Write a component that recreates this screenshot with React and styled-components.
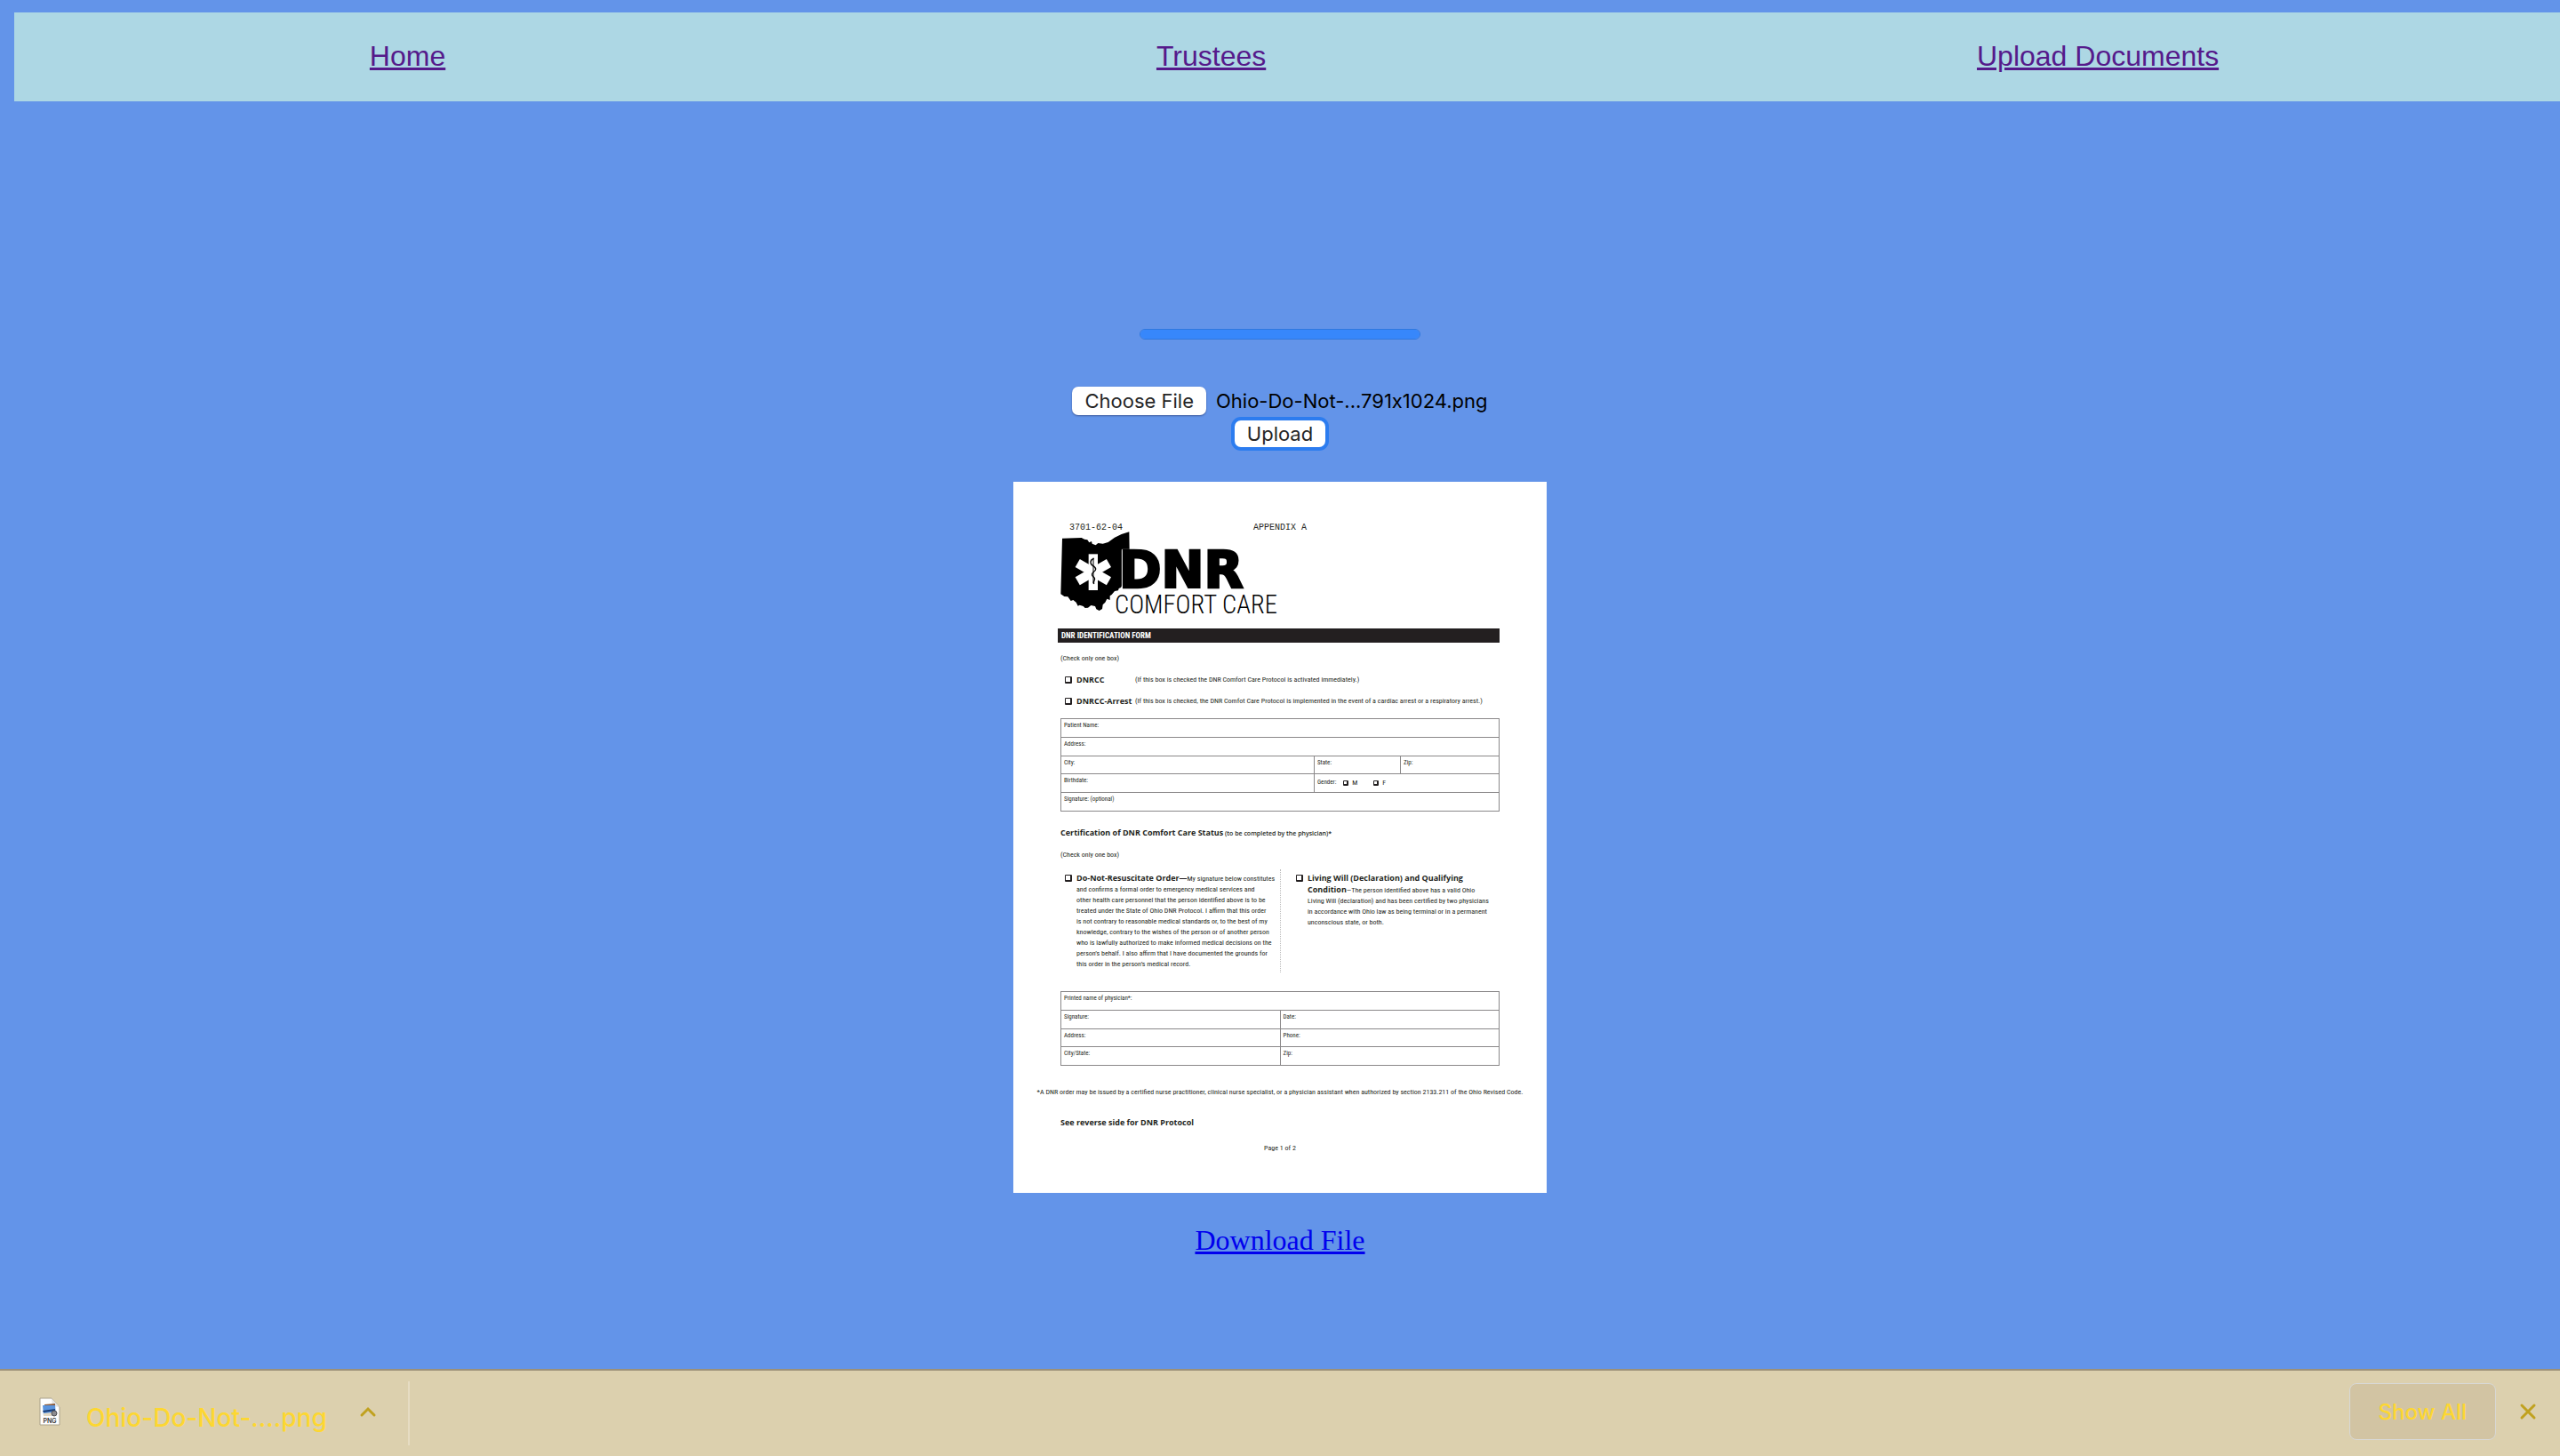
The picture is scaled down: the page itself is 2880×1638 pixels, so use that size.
import React from "react";
import styled, { createGlobalStyle, css } from "styled-components";

const GlobalStyle = createGlobalStyle`
  *, *::before, *::after { box-sizing: border-box; }
  body { margin: 0; background: #6394e9; }
`;

const ui = css`
  font-family: Inter, Roboto, "Liberation Sans", sans-serif;
  font-variant-ligatures: no-contextual;
`;

const Page = styled.div`
  display: flex;
  flex-direction: column;
  min-height: 100vh;
  padding-top: 14px;
  overflow: hidden;
`;

const Nav = styled.nav`
  display: flex;
  flex: none;
  justify-content: space-around;
  width: 100vw;
  margin-left: 16px;
  padding: 31px 0 33px;
  background: #add7e4;
`;

const NavLink = styled.a`
  color: #551a8b;
  font: 32px/36px "Liberation Sans", Arial, sans-serif;
`;

const Main = styled.main`
  display: flex;
  flex: 1;
  flex-direction: column;
  align-items: center;
  padding: 256px 0 120px;
`;

const Progress = styled.progress`
  appearance: none;
  display: block;
  width: 316px;
  height: 12px;
  border: 1px solid #2f78df;
  border-radius: 6px;
  overflow: hidden;
  background: #3787fb;
  &::-webkit-progress-bar { background: #3787fb; }
  &::-webkit-progress-value { background: #3787fb; }
`;

const UploadForm = styled.form`
  display: flex;
  flex-direction: column;
  align-items: center;
  gap: 6px;
  margin: 53px 0 39px;
`;

const FileField = styled.label`
  ${ui}
  position: relative;
  display: flex;
  align-items: center;
  gap: 11px;
  font-size: 22px;
  line-height: 32px;
  color: #000;
`;

const HiddenFile = styled.input`
  position: absolute;
  inset: 0;
  width: 100%;
  opacity: 0;
`;

const pushButton = css`
  ${ui}
  border: 0;
  border-radius: 7px;
  background: #fff;
  color: #262626;
  font-size: 22px;
  box-shadow: 0 1px 2px rgba(0, 0, 40, 0.4);
`;

const ChooseButton = styled.span`
  ${pushButton}
  padding: 0 14px;
`;

const UploadButton = styled.button`
  ${pushButton}
  height: 30px;
  padding: 0 14px;
  line-height: 30px;
  box-shadow: 0 0 0 4px #2c7cef;
`;

const Download = styled.a`
  margin-top: 35px;
  color: #0000ee;
  font: 32px/36px "Liberation Serif", "Times New Roman", serif;
`;

const Sheet = styled.article`
  display: flex;
  flex-direction: column;
  width: 600px;
  padding: 48px 53px 44px;
  background: #fff;
  color: #231f20;
  font: 8px/12px "Roboto Condensed", Lato, sans-serif;
  white-space: nowrap;
`;

const CodeLine = styled.div`
  display: grid;
  grid-template-columns: 207px auto;
  padding-left: 10px;
  font: 10px/8px "Liberation Mono", monospace;
`;

const Logo = styled.svg`
  display: block;
  width: 247px;
  height: 103px;
`;

const Banner = styled.h1`
  margin: 6px 0 0 -3px;
  padding-left: 4px;
  background: #231f20;
  color: #fff;
  font-size: 9px;
  line-height: 16px;
`;

const Line = styled.p`
  margin: ${(p) => p.$top}px 0 0;
  text-align: ${(p) => (p.$center ? "center" : "left")};
`;

const Wide = styled(Line)`
  display: flex;
  justify-content: center;
`;

const Strong = styled.strong`
  color: #231f20;
  font: bold 9px/12px "Open Sans", sans-serif;
`;

const Note = styled.span`
  font: 600 7px/12px "Open Sans", sans-serif;
`;

const Option = styled.label`
  display: grid;
  grid-template-columns: 13px 66px auto;
  align-items: center;
  margin-top: 12px;
  padding-left: 5px;
`;

const Box = styled.input.attrs({ type: "checkbox" })`
  appearance: none;
  width: ${(p) => (p.$small ? 6 : 8)}px;
  height: ${(p) => (p.$small ? 6 : 8)}px;
  margin: 0;
  border: solid #231f20;
  border-width: 1px 2px 2px 1px;
  border-radius: 1px;
`;

const Table = styled.table`
  width: 100%;
  margin-top: ${(p) => p.$top}px;
  border-collapse: collapse;
  table-layout: fixed;
  font-size: 7px;
  line-height: 10px;
`;

const Cell = styled.td`
  height: ${(p) => (p.$short ? 20 : 21)}px;
  padding: 2px 3px;
  border: 1px solid #8a8889;
  vertical-align: top;
`;

const Genders = styled.div`
  display: flex;
  align-items: center;
  gap: 18px;
`;

const GenderName = styled.span`
  margin-right: -10px;
`;

const Gender = styled.label`
  display: flex;
  align-items: center;
  gap: 4px;
  padding-top: 3px;
  font-size: 8px;
`;

const Columns = styled.div`
  display: grid;
  grid-template-columns: repeat(2, minmax(0, 1fr));
  height: 116px;
  margin-top: 10px;
`;

const Statement = styled.label`
  display: grid;
  grid-template-columns: 13px auto;
  justify-content: start;
  align-items: start;
  padding: 4px 0 0 5px;
  & + & {
    padding-left: 17px;
    border-left: 1px dotted #bbb;
  }
  ${Box} { margin-top: 2px; }
`;

const Shelf = styled.footer`
  ${ui}
  display: flex;
  flex: none;
  align-items: center;
  height: 98px;
  padding: 0 26px 4px 44px;
  border-top: 2px solid #9c9078;
  background: #dcd0ae;
  color: #fdd731;
`;

const Divider = styled.div`
  width: 2px;
  height: 72px;
  margin: 4px auto 0 35px;
  background: #e6dcc3;
`;

const Name = styled.span`
  margin: 14px 36px 0 29px;
  font-size: 28px;
  font-weight: 500;
  line-height: 36px;
`;

const IconButton = styled.button`
  display: flex;
  padding: 0;
  border: 0;
  background: none;
  color: #c0a11f;
`;

const ShowAll = styled.button`
  ${ui}
  height: 64px;
  margin-right: 26px;
  padding: 0 32px;
  border: 1px solid #d8d8d6;
  border-radius: 8px;
  background: #d2c4a3;
  color: #fdd731;
  font-size: 24px;
  font-weight: 500;
`;

function DnrLogo() {
  return (
    <Logo viewBox="39 51 741 309" role="img" aria-label="DNR Comfort Care">
      <path
        fill="#000"
        d="M45 74 L110 72 L120 77 L130 79 L136 88 L144 84 L146 92 L158 97 L166 90 L182 92 L200 87 L222 71 L245 60 L271 52 L272 118 L248 118 L248 232 L243 240 L236 243 L234 250 L222 252 L212 264 L206 268 L206 282 L196 278 L190 290 L182 298 L180 312 L170 318 L160 313 L156 303 L142 300 L132 308 L122 309 L116 303 L104 299 L98 302 L92 290 L82 282 L74 285 L64 271 L52 270 L40 262 Z"
      />
      <g fill="#fff">
        <rect x="134" y="127" width="31" height="122" />
        <rect x="134" y="127" width="31" height="122" transform="rotate(60 149.500 188)" />
        <rect x="134" y="127" width="31" height="122" transform="rotate(-60 149.500 188)" />
      </g>
      <path d="M150 140 V226" stroke="#000" strokeWidth="3" />
      <path
        d="M152 142 C138 146 138 160 148 166 C162 174 160 182 150 188 C140 196 148 202 154 208 C158 214 148 216 152 228"
        fill="none"
        stroke="#000"
        strokeWidth="4"
      />
      <path d="M275 112 H247 V240" fill="none" stroke="#fff" strokeWidth="3" />
      <text
        x="237"
        y="239"
        fontFamily="DejaVu Sans, sans-serif"
        fontWeight="bold"
        fontSize="172"
        stroke="#000"
        strokeWidth="8"
      >
        DNR
      </text>
      <text x="222" y="328" fontFamily="Roboto Condensed, Lato, sans-serif" fontWeight="300" fontSize="86">
        COMFORT CARE
      </text>
    </Logo>
  );
}

function FileIcon() {
  return (
    <svg width="24" height="32" viewBox="0 0 24 32" aria-hidden="true">
      <path d="M1 1 H14 L23 11 V31 H1 Z" fill="#fff" stroke="#a9a08a" />
      <path d="M14 1 L15 10 L23 11 Z" fill="#e4e4e4" />
      <path d="M6 8 L18 7 V10 H6 Z" fill="#8a5a3a" />
      <path d="M4 9 L18 9 L19 20 L5 21 Z" fill="#5b94dd" />
      <path d="M4 15 L18 13 V15 L5 17 Z" fill="#1c3f78" />
      <path d="M5 18 L15 17 L14 21 L5 21 Z" fill="#e3d9c4" />
      <circle cx="17" cy="18" r="3" fill="#8b8b90" stroke="#4d4d52" />
      <text x="12" y="29" textAnchor="middle" fontFamily="Inter, sans-serif" fontSize="7" fontWeight="600" fill="#333">
        PNG
      </text>
    </svg>
  );
}

const orderLines = [
  "and confirms a formal order to emergency medical services and",
  "other health care personnel that the person identified above is to be",
  "treated under the State of Ohio DNR Protocol. I affirm that this order",
  "is not contrary to reasonable medical standards or, to the best of my",
  "knowledge, contrary to the wishes of the person or of another person",
  "who is lawfully authorized to make informed medical decisions on the",
  "person’s behalf. I also affirm that I have documented the grounds for",
  "this order in the person’s medical record.",
];

const willLines = [
  "Living Will (declaration) and has been certified by two physicians",
  "in accordance with Ohio law as being terminal or in a permanent",
  "unconscious state, or both.",
];

const Lines = ({ items }) =>
  items.map((t) => (
    <React.Fragment key={t}>
      <br />
      {t}
    </React.Fragment>
  ));

function DnrForm() {
  return (
    <Sheet>
      <CodeLine>
        <span>3701-62-04</span>
        <span>APPENDIX A</span>
      </CodeLine>
      <DnrLogo />
      <Banner>DNR IDENTIFICATION FORM</Banner>
      <Line $top={12}>(Check only one box)</Line>
      <Option>
        <Box />
        <Strong>DNRCC</Strong>
        <span>(If this box is checked the DNR Comfort Care Protocol is activated immediately.)</span>
      </Option>
      <Option>
        <Box />
        <Strong>DNRCC-Arrest</Strong>
        <span>
          (If this box is checked, the DNR Comfot Care Protocol is implemented in the event of a cardiac arrest or a
          respiratory arrest.)
        </span>
      </Option>
      <Table $top={13}>
        <colgroup>
          <col />
          <col width="97" />
          <col width="111" />
        </colgroup>
        <tbody>
          <tr><Cell colSpan={3}>Patient Name:</Cell></tr>
          <tr><Cell colSpan={3}>Address:</Cell></tr>
          <tr>
            <Cell $short>City:</Cell>
            <Cell $short>State:</Cell>
            <Cell $short>Zip:</Cell>
          </tr>
          <tr>
            <Cell>Birthdate:</Cell>
            <Cell colSpan={2}>
              <Genders>
                <GenderName>Gender:</GenderName>
                <Gender><Box $small />M</Gender>
                <Gender><Box $small />F</Gender>
              </Genders>
            </Cell>
          </tr>
          <tr><Cell colSpan={3}>Signature: (optional)</Cell></tr>
        </tbody>
      </Table>
      <Line $top={18}>
        <Strong>Certification of DNR Comfort Care Status</Strong> <Note>(to be completed by the physician)*</Note>
      </Line>
      <Line $top={12}>(Check only one box)</Line>
      <Columns>
        <Statement>
          <Box />
          <span>
            <Strong>Do-Not-Resuscitate Order—</Strong>My signature below constitutes
            <Lines items={orderLines} />
          </span>
        </Statement>
        <Statement>
          <Box />
          <span>
            <Strong>Living Will (Declaration) and Qualifying</Strong>
            <br />
            <Strong>Condition</Strong>—The person identified above has a valid Ohio
            <Lines items={willLines} />
          </span>
        </Statement>
      </Columns>
      <Table $top={21}>
        <tbody>
          <tr><Cell colSpan={2}>Printed name of physician*:</Cell></tr>
          <tr><Cell>Signature:</Cell><Cell>Date:</Cell></tr>
          <tr><Cell $short>Address:</Cell><Cell $short>Phone:</Cell></tr>
          <tr><Cell>City/State:</Cell><Cell>Zip:</Cell></tr>
        </tbody>
      </Table>
      <Wide $top={24}>
        *A DNR order may be issued by a certified nurse practitioner, clinical nurse specialist, or a physician
        assistant when authorized by section 2133.211 of the Ohio Revised Code.
      </Wide>
      <Line $top={22}><Strong>See reverse side for DNR Protocol</Strong></Line>
      <Line $top={16} $center>Page 1 of 2</Line>
    </Sheet>
  );
}

export default function App() {
  return (
    <>
      <GlobalStyle />
      <Page>
        <Nav>
          <NavLink href="#home">Home</NavLink>
          <NavLink href="#trustees">Trustees</NavLink>
          <NavLink href="#upload">Upload Documents</NavLink>
        </Nav>
        <Main>
          <Progress value={100} max={100} aria-label="Upload progress" />
          <UploadForm onSubmit={(e) => e.preventDefault()}>
            <FileField>
              <HiddenFile type="file" />
              <ChooseButton>Choose File</ChooseButton>
              <span>Ohio-Do-Not-...791x1024.png</span>
            </FileField>
            <UploadButton type="submit">Upload</UploadButton>
          </UploadForm>
          <DnrForm />
          <Download href="#download">Download File</Download>
        </Main>
        <Shelf>
          <FileIcon />
          <Name>Ohio-Do-Not-....png</Name>
          <IconButton aria-label="Download options">
            <svg width="20" height="14" viewBox="0 0 20 14">
              <path d="M3 11 L10 4 L17 11" fill="none" stroke="currentColor" strokeWidth="3" strokeLinecap="round" />
            </svg>
          </IconButton>
          <Divider />
          <ShowAll>Show All</ShowAll>
          <IconButton aria-label="Close">
            <svg width="20" height="20" viewBox="0 0 20 20">
              <path d="M3 3 L17 17 M17 3 L3 17" fill="none" stroke="currentColor" strokeWidth="3" strokeLinecap="round" />
            </svg>
          </IconButton>
        </Shelf>
      </Page>
    </>
  );
}
